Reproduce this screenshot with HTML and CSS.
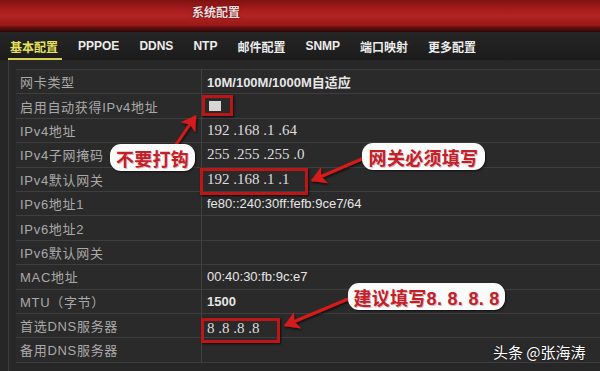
FILE: index.html
```html
<!DOCTYPE html>
<html lang="zh">
<head>
<meta charset="utf-8">
<title>系统配置</title>
<link rel="stylesheet" href="styles.css">
</head>
<body>
<div class="page">
  <header class="titlebar"><span class="title">系统配置</span></header>
  <nav class="tabs">
    <span class="tab active">基本配置</span>
    <span class="tab">PPPOE</span>
    <span class="tab">DDNS</span>
    <span class="tab">NTP</span>
    <span class="tab">邮件配置</span>
    <span class="tab">SNMP</span>
    <span class="tab">端口映射</span>
    <span class="tab">更多配置</span>
  </nav>
  <main class="content">
    <div class="table">
      <div class="row"><div class="label">网卡类型</div><div class="value bold">10M/100M/1000M自适应</div></div>
      <div class="row"><div class="label">启用自动获得IPv4地址</div><div class="value"><span class="checkbox"></span></div></div>
      <div class="row"><div class="label">IPv4地址</div><div class="value serif">192 .168 .1 .64</div></div>
      <div class="row"><div class="label">IPv4子网掩码</div><div class="value serif">255 .255 .255 .0</div></div>
      <div class="row"><div class="label">IPv4默认网关</div><div class="value serif">192 .168 .1 .1</div></div>
      <div class="row"><div class="label">IPv6地址1</div><div class="value">fe80::240:30ff:fefb:9ce7/64</div></div>
      <div class="row"><div class="label">IPv6地址2</div><div class="value"></div></div>
      <div class="row"><div class="label">IPv6默认网关</div><div class="value"></div></div>
      <div class="row"><div class="label">MAC地址</div><div class="value">00:40:30:fb:9c:e7</div></div>
      <div class="row"><div class="label">MTU（字节）</div><div class="value bold">1500</div></div>
      <div class="row"><div class="label">首选DNS服务器</div><div class="value serif low">8 .8 .8 .8</div></div>
      <div class="row"><div class="label">备用DNS服务器</div><div class="value"></div></div>
    </div>
  </main>

  <div class="hl hl-check"></div>
  <div class="hl hl-gw"></div>
  <div class="hl hl-dns"></div>

  <svg class="arrows" width="600" height="371" viewBox="0 0 600 371">
    <defs>
      <marker id="ah" markerWidth="6" markerHeight="6" refX="4.2" refY="3" orient="auto" markerUnits="strokeWidth">
        <path d="M0,0 L5,3 L0,6 L1.2,3 Z" fill="#d41a1a"/>
      </marker>
      <filter id="sh" x="-20%" y="-20%" width="140%" height="140%">
        <feDropShadow dx="1" dy="1.5" stdDeviation="1" flood-color="#000" flood-opacity="0.7"/>
      </filter>
    </defs>
    <g filter="url(#sh)" stroke="#d41a1a" stroke-width="3" fill="none" stroke-linecap="round">
      <line x1="173" y1="149" x2="195" y2="117" marker-end="url(#ah)"/>
      <line x1="364" y1="158" x2="313" y2="180" marker-end="url(#ah)"/>
      <line x1="348" y1="299" x2="286" y2="325" marker-end="url(#ah)"/>
    </g>
  </svg>

  <div class="bubble b1">不要打钩</div>
  <div class="bubble b2">网关必须填写</div>
  <div class="bubble b3">建议填写8. 8. 8. 8</div>

  <div class="watermark">头条 @张海涛</div>
</div>
</body>
</html>
```
FILE: styles.css
```css
html, body {
  margin: 0;
  padding: 0;
  background: #232323;
}
.page {
  position: relative;
  width: 600px;
  height: 371px;
  overflow: hidden;
  background: #262626;
  font-family: "Liberation Sans", "Noto Sans CJK SC", sans-serif;
}
.titlebar {
  height: 32px;
  background: linear-gradient(180deg, #7e1212 0%, #a81c1c 30%, #b22424 50%, #9a1818 78%, #5a0c0c 88%, #2a0808 100%);
  box-sizing: border-box;
  padding-left: 192px;
  display: flex;
  align-items: center;
}
.title {
  color: #f2dede;
  font-family: "Noto Sans CJK SC", sans-serif;
  font-size: 12px;
  font-weight: 700;
  text-shadow: 0 0 2px #400;
  margin-top: -9px;
}
.tabs {
  height: 28px;
  background: linear-gradient(180deg, #262626, #1c1c1c);
  display: flex;
  align-items: center;
  gap: 20px;
  padding-left: 10px;
  box-sizing: border-box;
  border-bottom: 1px solid #1a1a1a;
}
.tab {
  color: #ececec;
  font-family: "Liberation Sans", "Noto Sans CJK SC", sans-serif;
  font-size: 12px;
  font-weight: 700;
  padding-top: 1px;
}
.tab.active {
  color: #e6e25a;
  position: relative;
}
.tab.active::after {
  content: "";
  position: absolute;
  left: -2px;
  right: -4px;
  bottom: -5px;
  height: 2px;
  background: #d8d050;
}
.content {
  margin-left: 8px;
  border-left: 1px solid #3b3b3b;
  padding: 9px 0 0 7px;
  height: 311px;
  box-sizing: border-box;
  background: #272727;
}
.table {
  border-top: 1px solid #3c3c3c;
  background: #2a2a2a;
}
.row {
  display: grid;
  grid-template-columns: 186px 1fr;
  height: 24.4px;
  border-bottom: 1px solid #3e3e3e;
  box-sizing: border-box;
}
.label {
  color: #a9a9a9;
  font-family: "Liberation Sans", "Noto Sans CJK SC", sans-serif;
  font-size: 13px;
  letter-spacing: 0.7px;
  padding-left: 4px;
  display: flex;
  align-items: center;
  border-right: 1px solid #424242;
}
.value {
  color: #e6e6e6;
  font-size: 13px;
  padding-left: 5px;
  display: flex;
  align-items: center;
}
.value.bold {
  font-weight: 700;
}
.value.serif {
  font-family: "Liberation Serif", serif;
  font-size: 15px;
  color: #dcdcdc;
}
.value.low {
  padding-top: 5px;
}
.checkbox {
  width: 12px;
  height: 10px;
  background: #d6d6d6;
  margin-left: 2px;
}
.hl {
  position: absolute;
  border: 3px solid #bc1616;
  box-shadow: 1px 1px 2px rgba(0,0,0,0.7);
  box-sizing: border-box;
}
.hl-check { left: 202px; top: 95px; width: 31px; height: 21px; }
.hl-gw { left: 200px; top: 168px; width: 108px; height: 27px; }
.hl-dns { left: 201px; top: 318px; width: 79px; height: 25px; }
.arrows {
  position: absolute;
  left: 0;
  top: 0;
}
.bubble {
  position: absolute;
  background: #fbfbfb;
  border-radius: 11px;
  color: #c3202a;
  font-family: "Liberation Sans", "Noto Sans CJK SC", sans-serif;
  font-weight: 700;
  font-size: 18px;
  letter-spacing: 0.3px;
  height: 27px;
  display: flex;
  align-items: center;
  justify-content: center;
  box-sizing: border-box;
  box-shadow: 1px 1px 2px rgba(0,0,0,0.6);
  text-shadow: 1px 1px 0 rgba(120,0,0,0.25);
}
.b1 { left: 110px; top: 144px; width: 85px; }
.b2 { left: 362px; top: 143px; width: 123px; }
.b3 { left: 348px; top: 283px; width: 157px; }
.watermark {
  position: absolute;
  left: 493px;
  top: 341px;
  color: #ffffff;
  font-family: "Noto Sans CJK SC", sans-serif;
  font-size: 15px;
  text-shadow: 0 0 2px rgba(0,0,0,0.8);
}
```
